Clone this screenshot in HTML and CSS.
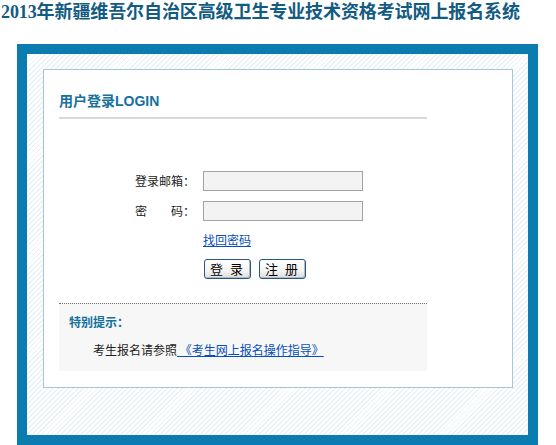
FILE: index.html
```html
<!DOCTYPE html>
<html lang="zh-CN">
<head>
    <meta charset="UTF-8">
    <title>2013年新疆维吾尔自治区高级卫生专业技术资格考试网上报名系统</title>
    <link rel="stylesheet" href="styles.css">
</head>
<body>
    <h1 class="site-title">2013年新疆维吾尔自治区高级卫生专业技术资格考试网上报名系统</h1>

    <div class="frame">
        <div class="panel">
            <div class="column">
                <h2 class="panel-title">用户登录LOGIN</h2>

                <div class="login-form">
                    <div class="form-row">
                        <label for="email">登录邮箱：</label>
                        <input type="text" id="email">
                    </div>
                    <div class="form-row">
                        <label for="pwd">密　　码：</label>
                        <input type="password" id="pwd">
                    </div>
                    <div class="form-row">
                        <span></span>
                        <a href="#" class="forgot">找回密码</a>
                    </div>
                    <div class="form-row buttons">
                        <span></span>
                        <div class="btn-group">
                            <button class="btn">登 录</button>
                            <button class="btn">注 册</button>
                        </div>
                    </div>
                </div>

                <!-- 提示 -->
                <div class="notice">
                    <p class="notice-title">特别提示：</p>
                    <p class="notice-text">考生报名请参照<a href="#"> 《考生网上报名操作指导》 </a></p>
                </div>
            </div>
        </div>
    </div>
</body>
</html>
```

FILE: styles.css
```css
body {
    margin: 0;
    font-family: "Noto Sans CJK SC", "Liberation Sans", sans-serif;
    font-size: 12px;
    color: #222;
    background-color: #fff;
}
.site-title {
    margin: 0;
    padding: 1px 0 0 1px;
    height: 43px;
    font-family: "Liberation Serif", "Noto Sans CJK SC", serif;
    font-size: 18px;
    line-height: 22px;
    font-weight: bold;
    letter-spacing: -0.1px;
    color: #125b82;
}
.frame {
    margin-left: 17px;
    border: 10px solid #0a7caf;
    padding: 15px 15px 47px 16px;
    width: 470px;
    background-color: #fff;
    background-image: repeating-linear-gradient(135deg, #fff 0, #fff 2.2px, #e9f1f9 2.2px, #e9f1f9 3.5px);
}
.panel {
    border: 1px solid #a7c7d7;
    background-color: #fff;
    padding: 0 85px 16px 15px;
}
.column {
    width: 368px;
}
.panel-title {
    margin: 0;
    padding: 21px 0 6px 0;
    font-family: "Liberation Sans", "Noto Sans CJK SC", sans-serif;
    font-size: 14px;
    line-height: 20px;
    color: #14709c;
    border-bottom: 2px solid #d9d9d9;
}
.login-form {
    margin: 52px 0 0 76px;
}
.form-row {
    display: flex;
    align-items: center;
    gap: 8px;
    margin-bottom: 10px;
}
.form-row label,
.form-row > span {
    width: 60px;
    line-height: 16px;
}
.form-row input {
    width: 160px;
    height: 20px;
    box-sizing: border-box;
    border: 1px solid #a2a2a2;
    background-color: #f3f3f3;
    padding: 0 3px;
    margin: 0;
}
.forgot {
    color: #0650b8;
    line-height: 16px;
    margin-top: 1px;
}
.buttons {
    margin-top: 11px;
    margin-bottom: 0;
}
.btn-group {
    display: flex;
    gap: 8px;
    margin-left: 1px;
}
.btn {
    width: 47px;
    height: 20px;
    padding: 0;
    border: 1px solid #24578a;
    border-radius: 3px;
    background: linear-gradient(#ffffff, #f4f4f4 60%, #dcdcdc);
    box-shadow: inset -1px -1px 0 #b8b8b8;
    font-family: "Noto Sans CJK SC", sans-serif;
    font-size: 13px;
    line-height: 18px;
    letter-spacing: 2px;
    color: #000;
    cursor: pointer;
}
.notice {
    margin-top: 24px;
    border-top: 1px dotted #707070;
    background-color: #f7f7f7;
    padding: 10px 10px 13px 10px;
}
.notice p {
    margin: 0;
    line-height: 16px;
}
.notice-title {
    font-weight: bold;
    color: #14709c;
}
.notice-text {
    margin-top: 12px !important;
    text-indent: 24px;
}
.notice-text a {
    color: #0650b8;
}
```
